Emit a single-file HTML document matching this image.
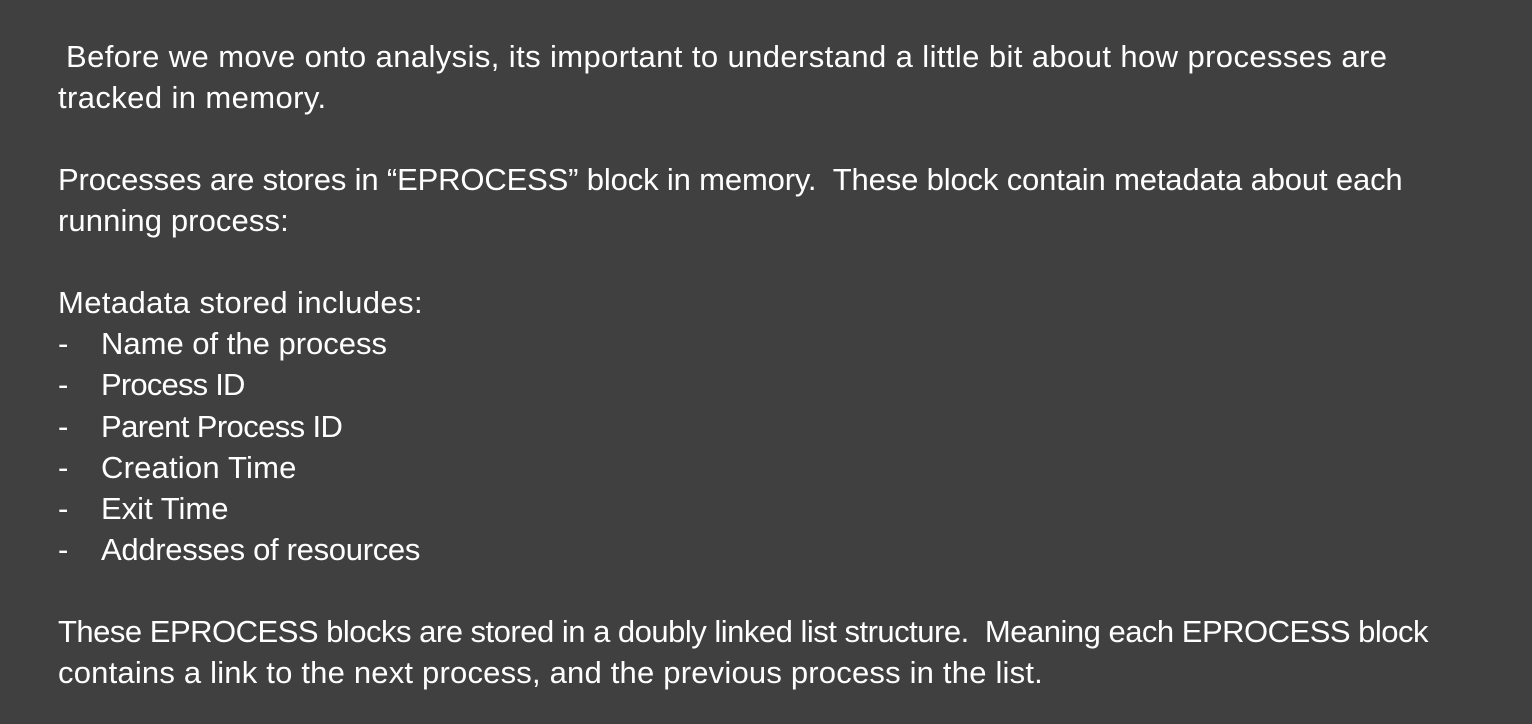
<!DOCTYPE html>
<html><head><style>
html,body{margin:0;padding:0;}
body{width:1532px;height:724px;background:#404040;overflow:hidden;position:relative;font-family:"Liberation Sans",sans-serif;color:#fff;font-size:31px;}
.l{position:absolute;left:58px;white-space:nowrap;line-height:30px;letter-spacing:0.4px;}
.i{position:absolute;left:101px;white-space:nowrap;line-height:30px;letter-spacing:0px;}
</style></head><body>
<div class="l" style="top:42px;left:66px">Before we move onto analysis, its important to understand a little bit about how processes are</div>
<div class="l" style="top:83px">tracked in memory.</div>
<div class="l" style="top:165px;letter-spacing:-0.15px">Processes are stores in “EPROCESS” block in memory.&nbsp; These block contain metadata about each</div>
<div class="l" style="top:206px;letter-spacing:0.1px">running process:</div>
<div class="l" style="top:288px">Metadata stored includes:</div>
<div class="l" style="top:329px">-</div><div class="i" style="top:329px">Name of the process</div>
<div class="l" style="top:370px">-</div><div class="i" style="top:370px;letter-spacing:-0.8px">Process ID</div>
<div class="l" style="top:412px">-</div><div class="i" style="top:412px;letter-spacing:-0.6px">Parent Process ID</div>
<div class="l" style="top:453px">-</div><div class="i" style="top:453px;letter-spacing:0.2px">Creation Time</div>
<div class="l" style="top:494px">-</div><div class="i" style="top:494px">Exit Time</div>
<div class="l" style="top:535px">-</div><div class="i" style="top:535px;letter-spacing:-0.3px">Addresses of resources</div>
<div class="l" style="top:617px;letter-spacing:-0.5px">These EPROCESS blocks are stored in a doubly linked list structure.&nbsp; Meaning each EPROCESS block</div>
<div class="l" style="top:658px;letter-spacing:0.2px">contains a link to the next process, and the previous process in the list.</div>
</body></html>
